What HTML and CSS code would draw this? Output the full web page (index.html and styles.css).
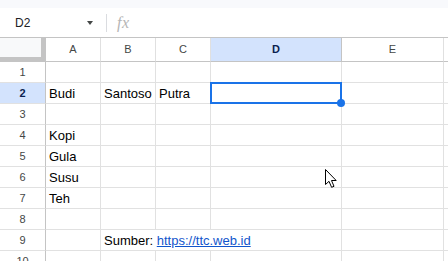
FILE: index.html
```html
<!DOCTYPE html>
<html>
<head>
<meta charset="utf-8">
<link rel="stylesheet" href="styles.css">
</head>
<body>
<div class="topband"></div>
<div class="fbar">
  <div class="namebox"><span class="ref">D2</span><span class="caret"></span></div>
  <div class="sep"></div>
  <div class="fx">fx</div>
</div>
<div class="sheet">
  <div class="corner"></div>
  <div class="ch">A</div>
  <div class="ch">B</div>
  <div class="ch">C</div>
  <div class="ch ch-sel">D</div>
  <div class="ch">E</div>
  <div class="ch ch-last"></div>

  <div class="rh">1</div><div class="c"></div><div class="c"></div><div class="c"></div><div class="c"></div><div class="c"></div><div class="c c-last"></div>
  <div class="rh rh-sel">2</div><div class="c">Budi</div><div class="c">Santoso</div><div class="c">Putra</div><div class="c c-active"><div class="sel"></div><div class="handle"></div></div><div class="c"></div><div class="c c-last"></div>
  <div class="rh">3</div><div class="c"></div><div class="c"></div><div class="c"></div><div class="c"></div><div class="c"></div><div class="c c-last"></div>
  <div class="rh">4</div><div class="c">Kopi</div><div class="c"></div><div class="c"></div><div class="c"></div><div class="c"></div><div class="c c-last"></div>
  <div class="rh">5</div><div class="c">Gula</div><div class="c"></div><div class="c"></div><div class="c"></div><div class="c"></div><div class="c c-last"></div>
  <div class="rh">6</div><div class="c">Susu</div><div class="c"></div><div class="c"></div><div class="c"></div><div class="c"></div><div class="c c-last"></div>
  <div class="rh">7</div><div class="c">Teh</div><div class="c"></div><div class="c"></div><div class="c"></div><div class="c"></div><div class="c c-last"></div>
  <div class="rh">8</div><div class="c"></div><div class="c"></div><div class="c"></div><div class="c"></div><div class="c"></div><div class="c c-last"></div>
  <div class="rh">9</div><div class="c"></div><div class="c c-span">Sumber: <a class="link" href="#">https://ttc.web.id</a></div><div class="c"></div><div class="c c-last"></div>
  <div class="rh">10</div><div class="c"></div><div class="c"></div><div class="c"></div><div class="c"></div><div class="c"></div><div class="c c-last"></div>
</div>
<svg class="cursor" width="14" height="20" viewBox="0 0 14 20">
  <path d="M0.5 0.5 L0.5 15.5 L4 12.3 L6.6 18.3 L9 17.3 L6.5 11.5 L11.2 11.5 Z" fill="#fff" stroke="#000" stroke-width="1" stroke-linejoin="round"/>
</svg>
</body>
</html>
```

FILE: styles.css
```css
html, body {
  margin: 0;
  padding: 0;
  background: #fff;
  overflow: hidden;
  width: 448px;
  height: 261px;
  font-family: "Liberation Sans", Arial, sans-serif;
}

.topband {
  height: 8px;
  background: #f8f9fc;
}

.fbar {
  height: 29px;
  display: flex;
  align-items: center;
  border-bottom: 1px solid #c4c4c4;
  background: #fff;
}

.namebox {
  width: 100px;
  display: flex;
  align-items: center;
  padding-left: 15px;
  box-sizing: border-box;
}

.ref {
  font-size: 12px;
  color: #202124;
  font-family: "Liberation Sans", Arial, sans-serif;
}

.caret {
  margin-left: auto;
  margin-right: 7px;
  width: 0;
  height: 0;
  border-left: 3.5px solid transparent;
  border-right: 3.5px solid transparent;
  border-top: 4px solid #444746;
}

.sep {
  width: 1px;
  height: 18px;
  background: #dadce0;
  margin-left: 6px;
}

.fx {
  margin-left: 10px;
  font-family: "Liberation Serif", serif;
  font-style: italic;
  font-size: 16px;
  color: #b5b5b5;
  letter-spacing: 0.5px;
}

.sheet {
  display: grid;
  grid-template-columns: 46px 55px 55px 55px 131px 102px 1fr;
  grid-template-rows: 24px repeat(10, 21px);
}

.sheet > div {
  box-sizing: border-box;
}

.corner {
  background: #f8f9fa;
  border-right: 5px solid #c4c4c4;
  border-bottom: 5px solid #c4c4c4;
}

.ch {
  border-right: 1px solid #e0e0e0;
  border-bottom: 1px solid #c4c4c4;
  font-size: 11px;
  color: #444746;
  text-align: center;
  line-height: 22px;
}

.ch-sel {
  background: #d3e3fd;
  color: #0b1f4f;
  border-right-color: #c4c4c4;
  font-weight: bold;
}

.rh {
  border-right: 1px solid #c4c4c4;
  border-bottom: 1px solid #e1e1e1;
  font-size: 11px;
  color: #444746;
  text-align: center;
  line-height: 20px;
}

.rh-sel {
  background: #d3e3fd;
  color: #0b1f4f;
  font-weight: bold;
}

.c {
  border-right: 1px solid #e1e1e1;
  border-bottom: 1px solid #e1e1e1;
  font-size: 13px;
  color: #000;
  padding: 1px 3px 0;
  line-height: 19px;
  white-space: nowrap;
}

.c-last {
  border-right: none;
}

.c-span {
  grid-column: span 3;
}

.c-active {
  position: relative;
}

.sel {
  position: absolute;
  top: -1px;
  left: -1px;
  right: -1px;
  bottom: -1px;
  border: 2px solid #1a73e8;
}

.handle {
  position: absolute;
  right: -4px;
  bottom: -4px;
  width: 8px;
  height: 8px;
  border-radius: 50%;
  background: #1a73e8;
}

.link {
  color: #1155cc;
  text-decoration: underline;
}

.cursor {
  position: absolute;
  left: 325px;
  top: 169px;
}
```
